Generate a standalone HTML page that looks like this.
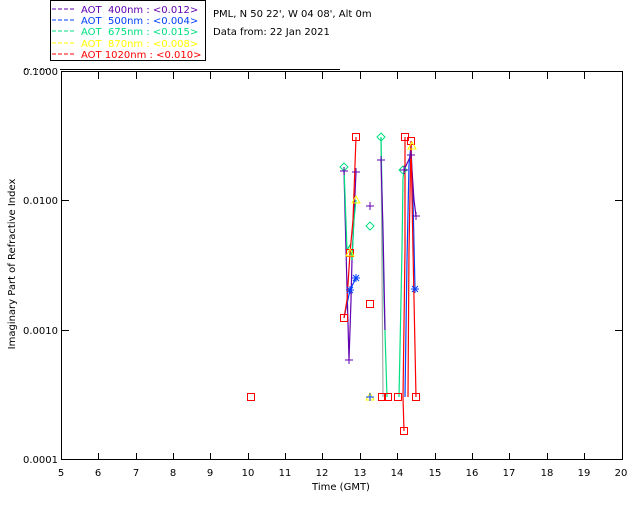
<!DOCTYPE html>
<html><head><meta charset="utf-8"><style>
body{margin:0;background:#fff;width:640px;height:512px;overflow:hidden}
svg{display:block}
text{font-family:"DejaVu Sans","Liberation Sans",sans-serif;font-size:10px}
</style></head><body>
<svg width="640" height="512" viewBox="0 0 640 512">
<rect x="50.5" y="0.5" width="155" height="60" fill="#fff" stroke="#000"/>
<g font-size="10">
<line x1="52" y1="9" x2="74" y2="9" stroke="#6000b0" stroke-dasharray="4,2"/>
<text x="81" y="13" fill="#6000b0" xml:space="preserve">AOT  400nm : &lt;0.012&gt;</text>
<line x1="52" y1="20" x2="74" y2="20" stroke="#0040ff" stroke-dasharray="4,2"/>
<text x="81" y="24" fill="#0040ff" xml:space="preserve">AOT  500nm : &lt;0.004&gt;</text>
<line x1="52" y1="31" x2="74" y2="31" stroke="#00e080" stroke-dasharray="4,2"/>
<text x="81" y="35" fill="#00e080" xml:space="preserve">AOT  675nm : &lt;0.015&gt;</text>
<line x1="52" y1="43" x2="74" y2="43" stroke="#ffff00" stroke-dasharray="4,2"/>
<text x="81" y="47" fill="#ffff00" xml:space="preserve">AOT  870nm : &lt;0.008&gt;</text>
<line x1="52" y1="54" x2="74" y2="54" stroke="#ff0000" stroke-dasharray="4,2"/>
<text x="81" y="58" fill="#ff0000" xml:space="preserve">AOT 1020nm : &lt;0.010&gt;</text>
</g>
<text x="213" y="17">PML, N 50 22', W 04 08', Alt 0m</text>
<text x="213" y="35">Data from: 22 Jan 2021</text>
<line x1="25" y1="69.5" x2="52" y2="69.5" stroke="#000" stroke-dasharray="1,3"/>
<line x1="60" y1="69.5" x2="340" y2="69.5" stroke="#000"/>
<!-- frame -->
<rect x="61.5" y="71.5" width="561" height="388" fill="none" stroke="#000"/>
<g stroke="#000">
<line x1="98.5" y1="460" x2="98.5" y2="453"/><line x1="136.5" y1="460" x2="136.5" y2="453"/><line x1="173.5" y1="460" x2="173.5" y2="453"/><line x1="210.5" y1="460" x2="210.5" y2="453"/><line x1="248.5" y1="460" x2="248.5" y2="453"/><line x1="285.5" y1="460" x2="285.5" y2="453"/><line x1="322.5" y1="460" x2="322.5" y2="453"/><line x1="360.5" y1="460" x2="360.5" y2="453"/><line x1="397.5" y1="460" x2="397.5" y2="453"/><line x1="435.5" y1="460" x2="435.5" y2="453"/><line x1="472.5" y1="460" x2="472.5" y2="453"/><line x1="509.5" y1="460" x2="509.5" y2="453"/><line x1="547.5" y1="460" x2="547.5" y2="453"/><line x1="584.5" y1="460" x2="584.5" y2="453"/>
<line x1="98.5" y1="72" x2="98.5" y2="79"/><line x1="136.5" y1="72" x2="136.5" y2="79"/><line x1="173.5" y1="72" x2="173.5" y2="79"/><line x1="210.5" y1="72" x2="210.5" y2="79"/><line x1="248.5" y1="72" x2="248.5" y2="79"/><line x1="285.5" y1="72" x2="285.5" y2="79"/><line x1="322.5" y1="72" x2="322.5" y2="79"/><line x1="360.5" y1="72" x2="360.5" y2="79"/><line x1="397.5" y1="72" x2="397.5" y2="79"/><line x1="435.5" y1="72" x2="435.5" y2="79"/><line x1="472.5" y1="72" x2="472.5" y2="79"/><line x1="509.5" y1="72" x2="509.5" y2="79"/><line x1="547.5" y1="72" x2="547.5" y2="79"/><line x1="584.5" y1="72" x2="584.5" y2="79"/>
<line x1="62" y1="200.5" x2="69" y2="200.5"/><line x1="62" y1="330.5" x2="69" y2="330.5"/>
<line x1="622" y1="200.5" x2="615" y2="200.5"/><line x1="622" y1="330.5" x2="615" y2="330.5"/>
</g>
<g text-anchor="end">
<text x="58" y="75">0.1000</text><text x="58" y="204">0.0100</text><text x="58" y="334">0.0010</text><text x="58" y="463">0.0001</text>
</g>
<g text-anchor="middle">
<text x="61" y="476">5</text><text x="98" y="476">6</text><text x="136" y="476">7</text><text x="173" y="476">8</text><text x="210" y="476">9</text><text x="248" y="476">10</text><text x="285" y="476">11</text><text x="322" y="476">12</text><text x="360" y="476">13</text><text x="397" y="476">14</text><text x="435" y="476">15</text><text x="472" y="476">16</text><text x="509" y="476">17</text><text x="547" y="476">18</text><text x="584" y="476">19</text><text x="621" y="476">20</text>
<text x="341" y="490">Time (GMT)</text>
<text transform="translate(15,264) rotate(-90)">Imaginary Part of Refractive Index</text>
</g>
<!-- data lines -->
<g fill="none" stroke-width="1.2">
<polyline stroke="#aaa" points="381,137 383,397"/>
<polyline stroke="#6000b0" points="344,171 346,250 349,360 351,300 352,260 356,172"/>
<polyline stroke="#00e080" points="344,167 347,250 350,245 352,260 354,220 356,200"/>
<polyline stroke="#0040ff" points="344,318 350,290 356,278"/>
<polyline stroke="#ff0000" points="356,137 353,220 350,253 347,300 344,318"/>
<polyline stroke="#00e080" points="381,137 384,300 387,397"/>
<polyline stroke="#6000b0" points="381,160 383,230 385,330"/>
<polyline stroke="#00e080" points="399,397 402,250 403,178 405,165"/>
<polyline stroke="#ff0000" points="404,431 403,397 405,250 405,137"/>
<polyline stroke="#0040ff" points="405,397 407,260 409,165 411,145 413,200 415,289"/>
<polyline stroke="#6000b0" points="404,170 411,155 414,200 416,216"/>
<polyline stroke="#ff0000" points="408,397 409,250 411,141 413,250 416,397"/>
</g>
<!-- markers -->
<g fill="none" stroke="#ff0000">
<rect x="352.5" y="133.5" width="7" height="7"/><rect x="346.5" y="249.5" width="7" height="7"/><rect x="340.5" y="314.5" width="7" height="7"/><rect x="366.5" y="300.5" width="7" height="7"/><rect x="247.5" y="393.5" width="7" height="7"/><rect x="378.5" y="393.5" width="7" height="7"/><rect x="384.5" y="393.5" width="7" height="7"/><rect x="394.5" y="393.5" width="7" height="7"/><rect x="400.5" y="427.5" width="7" height="7"/><rect x="401.5" y="133.5" width="7" height="7"/><rect x="407.5" y="137.5" width="7" height="7"/><rect x="412.5" y="393.5" width="7" height="7"/>
</g>
<g fill="none" stroke="#00e080">
<path d="M344,163 l4,4 -4,4 -4,-4z M370,222 l4,4 -4,4 -4,-4z M381,133 l4,4 -4,4 -4,-4z M403,166 l4,4 -4,4 -4,-4z"/>
</g>
<g fill="none" stroke="#6000b0">
<path d="M340,171h8M344,167v8 M345,360h8M349,356v8 M352,172h8M356,168v8 M366,206h8M370,202v8 M377,160h8M381,156v8 M400,170h8M404,166v8 M412,216h8M416,212v8 M407,155h8M411,151v8"/>
</g>
<g fill="none" stroke="#ffff00">
<path d="M356,196 l4,7 h-8z M350,249 l4,7 h-8z M412,142 l4,7 h-8z M370,393 l4,7 h-8z"/>
</g>
<g fill="none" stroke="#0040ff">
<path d="M352,278h8M356,274v8M353,275l6,6M359,275l-6,6 M346,290h8M350,286v8M347,287l6,6M353,287l-6,6 M411,289h8M415,285v8M412,286l6,6M418,286l-6,6 M366,397h8M370,393v8"/>
</g>
</svg>
</body></html>
